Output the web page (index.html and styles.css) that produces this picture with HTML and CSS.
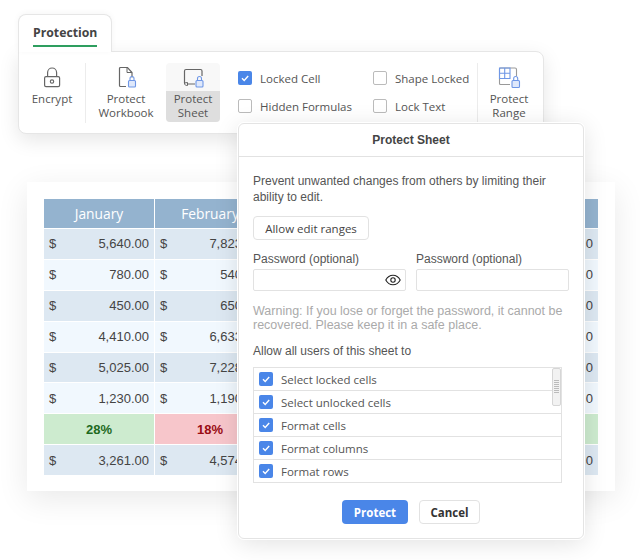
FILE: index.html
```html
<!DOCTYPE html>
<html lang="en">
<head>
    <meta charset="UTF-8">
    <title>Protect Sheet</title>
    <link rel="stylesheet" href="styles.css">
</head>
<body>

    <!-- Spreadsheet behind everything, middle columns are covered by the dialog -->
    <section class="sheet">
        <div class="grid">
            <div class="head">January</div><div class="head">February</div><div class="head"></div><div class="head"></div><div class="head"></div>

            <div class="cell dark"><span>$</span><span>5,640.00</span></div><div class="cell dark"><span>$</span><span>7,823.00</span></div><div class="cell dark"></div><div class="cell dark"></div><div class="cell dark end">0</div>
            <div class="cell light"><span>$</span><span>780.00</span></div><div class="cell light"><span>$</span><span>540.00</span></div><div class="cell light"></div><div class="cell light"></div><div class="cell light end">0</div>
            <div class="cell dark"><span>$</span><span>450.00</span></div><div class="cell dark"><span>$</span><span>650.00</span></div><div class="cell dark"></div><div class="cell dark"></div><div class="cell dark end">0</div>
            <div class="cell light"><span>$</span><span>4,410.00</span></div><div class="cell light"><span>$</span><span>6,633.00</span></div><div class="cell light"></div><div class="cell light"></div><div class="cell light end">0</div>
            <div class="cell dark"><span>$</span><span>5,025.00</span></div><div class="cell dark"><span>$</span><span>7,228.00</span></div><div class="cell dark"></div><div class="cell dark"></div><div class="cell dark end">0</div>
            <div class="cell light"><span>$</span><span>1,230.00</span></div><div class="cell light"><span>$</span><span>1,190.00</span></div><div class="cell light"></div><div class="cell light"></div><div class="cell light end">0</div>
            <div class="pct up">28%</div><div class="pct down">18%</div><div class="pct up"></div><div class="pct up"></div><div class="pct up"></div>
            <div class="cell dark"><span>$</span><span>3,261.00</span></div><div class="cell dark"><span>$</span><span>4,574.00</span></div><div class="cell dark"></div><div class="cell dark"></div><div class="cell dark end">0</div>
        </div>
    </section>

    <!-- Ribbon -->
    <section class="ribbon-wrap">
        <div class="tab"><span class="tab-label">Protection</span></div>
        <div class="ribbon">
            <div class="tool tool-encrypt">
                <svg class="icon" width="24" height="24" viewBox="0 0 24 24" fill="none">
                    <rect x="4.600" y="11.600" width="15" height="10" rx="1.400" stroke="#666" stroke-width="1.200"/>
                    <path d="M7.600 11.500V7.500a4.500 4.500 0 0 1 9 0v4" stroke="#666" stroke-width="1.200"/>
                    <circle cx="12" cy="16.600" r="1.700" stroke="#666" stroke-width="1.100"/>
                </svg>
                <span class="tool-label">Encrypt</span>
            </div>
            <div class="divider"></div>
            <div class="tool tool-book">
                <svg class="icon" width="24" height="24" viewBox="0 0 24 24" fill="none">
                    <path d="M12 21.500H6.500a1 1 0 0 1-1-1V3.500a1 1 0 0 1 1-1h7l4.500 5v5" stroke="#666" stroke-width="1.200"/>
                    <path d="M13 2.500v5h5" stroke="#666" stroke-width="1"/>
                    <rect x="14.500" y="15.500" width="7" height="6.500" rx="1" fill="#dfe8fb" stroke="#6f97e6" stroke-width="1.100"/>
                    <path d="M16 15.500v-2a2 2 0 0 1 4 0v2" stroke="#6f97e6" stroke-width="1.100"/>
                </svg>
                <span class="tool-label">Protect<br>Workbook</span>
            </div>
            <div class="tool tool-sheet">
                <div class="sheet-top">
                    <svg width="24" height="24" viewBox="0 0 24 24" fill="none">
                        <path d="M3.500 18V6a1.500 1.500 0 0 1 1.500-1.500h14.500A1.500 1.500 0 0 1 21 6v5M14 19H6.500" stroke="#666" stroke-width="1.200"/>
                        <path d="M3.500 18c0 2 1 2.500 3 2.500V17.500z" stroke="#666" stroke-width="1"/>
                        <rect x="15" y="15.500" width="7" height="6.500" rx="1" fill="#dfe8fb" stroke="#6f97e6" stroke-width="1.100"/>
                        <path d="M16.500 15.500v-2a2 2 0 0 1 4 0v2" stroke="#6f97e6" stroke-width="1.100"/>
                    </svg>
                </div>
                <span class="tool-label sheet-label">Protect<br>Sheet</span>
            </div>
            <div class="checks">
                <label class="check-row"><span class="box on"><svg width="14" height="14" viewBox="0 0 14 14"><path d="M4 7.200l2.200 2.200L10.200 5" fill="none" stroke="#fff" stroke-width="1.400"/></svg></span>Locked Cell</label>
                <label class="check-row"><span class="box"></span>Shape Locked</label>
                <label class="check-row"><span class="box"></span>Hidden Formulas</label>
                <label class="check-row"><span class="box"></span>Lock Text</label>
            </div>
            <div class="divider divider-right"></div>
            <div class="tool tool-range">
                <svg class="icon" width="26" height="24" viewBox="0 0 26 24" fill="none">
                    <path d="M14 19.500H4.500a1 1 0 0 1-1-1V4a1 1 0 0 1 1-1h14.500a1.500 1.500 0 0 1 1.500 1.500V11" stroke="#999" stroke-width="1.100"/>
                    <path d="M3.500 3h10.500v10.500H3.500zM3.500 8.200h10.500M8.700 3v10.500" stroke="#6f97e6" stroke-width="1.100"/>
                    <rect x="16" y="15.500" width="7.500" height="7" rx="1" fill="#dfe8fb" stroke="#6f97e6" stroke-width="1.100"/>
                    <path d="M17.700 15.500v-2a2 2 0 0 1 4 0v2" stroke="#6f97e6" stroke-width="1.100"/>
                </svg>
                <span class="tool-label">Protect<br>Range</span>
            </div>
        </div>
    </section>

    <!-- Dialog -->
    <section class="dialog">
        <header class="dialog-title">Protect Sheet</header>
        <div class="dialog-body">
            <p class="intro">Prevent unwanted changes from others by limiting their ability to edit.</p>
            <button class="btn-ranges" type="button">Allow edit ranges</button>
            <div class="passwords">
                <div class="field">
                    <label class="field-label">Password (optional)</label>
                    <div class="input">
                        <svg width="16" height="12" viewBox="0 0 16 12" fill="none">
                            <path d="M0.800 6C2.500 2.800 5 1.200 8 1.200S13.500 2.800 15.200 6C13.500 9.200 11 10.800 8 10.800S2.500 9.200 0.800 6z" stroke="#222" stroke-width="1.100"/>
                            <circle cx="8" cy="6" r="2.200" stroke="#222" stroke-width="1.100"/>
                        </svg>
                    </div>
                </div>
                <div class="field">
                    <label class="field-label">Password (optional)</label>
                    <div class="input"></div>
                </div>
            </div>
            <p class="warning">Warning: If you lose or forget the password, it cannot be recovered. Please keep it in a safe place.</p>
            <p class="allow">Allow all users of this sheet to</p>
            <div class="perm-list">
                <div class="perm"><span class="box on"><svg width="14" height="14" viewBox="0 0 14 14"><path d="M4 7.200l2.200 2.200L10.200 5" fill="none" stroke="#fff" stroke-width="1.400"/></svg></span>Select locked cells</div>
                <div class="perm"><span class="box on"><svg width="14" height="14" viewBox="0 0 14 14"><path d="M4 7.200l2.200 2.200L10.200 5" fill="none" stroke="#fff" stroke-width="1.400"/></svg></span>Select unlocked cells</div>
                <div class="perm"><span class="box on"><svg width="14" height="14" viewBox="0 0 14 14"><path d="M4 7.200l2.200 2.200L10.200 5" fill="none" stroke="#fff" stroke-width="1.400"/></svg></span>Format cells</div>
                <div class="perm"><span class="box on"><svg width="14" height="14" viewBox="0 0 14 14"><path d="M4 7.200l2.200 2.200L10.200 5" fill="none" stroke="#fff" stroke-width="1.400"/></svg></span>Format columns</div>
                <div class="perm"><span class="box on"><svg width="14" height="14" viewBox="0 0 14 14"><path d="M4 7.200l2.200 2.200L10.200 5" fill="none" stroke="#fff" stroke-width="1.400"/></svg></span>Format rows</div>
                <div class="scroll-thumb"></div>
            </div>
            <div class="actions">
                <button class="btn-protect" type="button">Protect</button>
                <button class="btn-cancel" type="button">Cancel</button>
            </div>
        </div>
    </section>

</body>
</html>
```

FILE: styles.css
```css
/* Global Styles */
body {
    margin: 0;
    background-color: #fff;
    color: #444;
    font-family: 'Open Sans', sans-serif;
    width: 640px;
    height: 560px;
    overflow: hidden;
    position: relative;
}

p {
    margin: 0;
}

/* Spreadsheet card */
.sheet {
    position: absolute;
    left: 27px;
    top: 182px;
    width: 588px;
    height: 309px;
    box-sizing: border-box;
    padding: 17px;
    background: #fff;
    box-shadow: 0 8px 30px rgba(0, 0, 0, 0.09);
}

.grid {
    display: grid;
    grid-template-columns: repeat(5, 110px);
    grid-template-rows: 29px repeat(8, 29.900px);
    gap: 1px;
    background: #fff;
    font-family: 'Liberation Sans', sans-serif;
    font-size: 13px;
    color: #444;
}

.head {
    background: #94b3cf;
    color: #fff;
    font-family: 'Open Sans', sans-serif;
    font-size: 13.800px;
    display: flex;
    align-items: center;
    justify-content: center;
}

.cell {
    display: flex;
    align-items: center;
    justify-content: space-between;
    padding: 0 5px;
}

.cell.end {
    justify-content: flex-end;
}

.dark {
    background: #dde8f2;
}

.light {
    background: #f1f8fe;
}

.pct {
    display: flex;
    align-items: center;
    justify-content: center;
    font-weight: bold;
}

.up {
    background: #cdebcf;
    color: #1e6a1e;
}

.down {
    background: #f7c6cb;
    color: #9a0c14;
}

/* Ribbon */
.ribbon-wrap {
    position: absolute;
    left: 18px;
    top: 14px;
    width: 526px;
}

.tab {
    width: 94px;
    height: 38px;
    box-sizing: border-box;
    padding: 9px 14px 0;
    background: #fff;
    border-radius: 8px 8px 0 0;
    border: 1px solid #e6e6e6;
    border-bottom: none;
    margin-bottom: -1px;
    position: relative;
    z-index: 1;
    box-shadow: 0 -1px 6px rgba(0, 0, 0, 0.04);
}

.tab-label {
    display: block;
    font-size: 12.250px;
    font-weight: bold;
    line-height: 18px;
    height: 21px;
    width: 64px;
    white-space: nowrap;
    color: #444;
    border-bottom: 2px solid #2e9e5f;
}

.ribbon {
    height: 83px;
    box-sizing: border-box;
    display: flex;
    padding: 11px 0 0;
    background: #fff;
    border: 1px solid #e6e6e6;
    border-radius: 0 8px 8px 8px;
    box-shadow: 0 6px 20px rgba(0, 0, 0, 0.1);
}

.tool {
    display: flex;
    flex-direction: column;
    align-items: center;
}

.tool-label {
    font-size: 11.500px;
    line-height: 14px;
    color: #555;
    text-align: center;
    margin-top: 3px;
}

.icon {
    margin-top: 2px;
}

.tool-encrypt {
    width: 66px;
}

.divider {
    width: 1px;
    height: 60px;
    background: #ececec;
}

.tool-book {
    width: 80px;
}

.tool-sheet {
    width: 54px;
    height: 59px;
    border-radius: 4px;
    overflow: hidden;
    background: #f8f8f8;
}

.sheet-top {
    height: 28px;
    padding-top: 2px;
    box-sizing: border-box;
}

.sheet-label {
    display: block;
    width: 100%;
    margin: 0;
    padding-top: 1px;
    height: 31px;
    background: #dedede;
}

.checks {
    display: grid;
    grid-template-columns: 135px 104px;
    grid-auto-rows: 28px;
    margin-left: 18px;
    padding-top: 1px;
}

.check-row {
    display: flex;
    align-items: center;
    gap: 8px;
    font-size: 11.500px;
    color: #555;
}

.box {
    width: 14px;
    height: 14px;
    box-sizing: border-box;
    border: 1px solid #bbb;
    border-radius: 2px;
    background: #fff;
    flex: none;
    display: block;
}

.box.on {
    background: #4a86e8;
    border: none;
}

.box svg {
    display: block;
}

.tool-range {
    width: 62px;
}

/* Dialog */
.dialog {
    position: absolute;
    left: 238px;
    top: 123px;
    width: 346px;
    height: 416px;
    box-sizing: border-box;
    background: #fff;
    border: 1px solid #e4e4e4;
    border-radius: 6px;
    box-shadow: 0 0 0 1px #fff, 0 4px 24px rgba(0, 0, 0, 0.12);
}

.dialog-title {
    height: 32px;
    line-height: 32px;
    text-align: center;
    border-bottom: 1px solid #e2e2e2;
    font-family: 'Liberation Sans', sans-serif;
    font-size: 12px;
    font-weight: bold;
    color: #444;
}

.dialog-body {
    padding: 16px 14px 0;
    font-family: 'Liberation Sans', sans-serif;
    font-size: 12px;
    color: #555;
}

.intro {
    line-height: 16px;
}

.btn-ranges {
    display: block;
    margin-top: 11px;
    width: 116px;
    height: 24px;
    padding: 0;
    background: #fff;
    border: 1px solid #e2e2e2;
    border-radius: 4px;
    font-family: 'Open Sans', sans-serif;
    font-size: 11.500px;
    color: #444;
}

.passwords {
    display: flex;
    gap: 10px;
    margin-top: 11px;
}

.field-label {
    display: block;
    line-height: 16px;
}

.field {
    width: 153px;
}

.input {
    margin-top: 2px;
    height: 22px;
    box-sizing: border-box;
    border: 1px solid #e2e2e2;
    border-radius: 2px;
    display: flex;
    align-items: center;
    justify-content: flex-end;
    padding-right: 4px;
}

.warning {
    margin-top: 13px;
    line-height: 14px;
    font-size: 12.500px;
    color: #aaa;
}

.allow {
    margin-top: 11px;
    line-height: 16px;
}

.perm-list {
    margin-top: 8px;
    width: 309px;
    height: 116px;
    box-sizing: border-box;
    border: 1px solid #e2e2e2;
    position: relative;
}

.perm {
    height: 23px;
    box-sizing: border-box;
    display: flex;
    align-items: center;
    gap: 8px;
    padding-left: 5px;
    font-family: 'Open Sans', sans-serif;
    font-size: 11.500px;
    color: #555;
    border-bottom: 1px solid #e2e2e2;
}

.perm:last-of-type {
    border-bottom: none;
}

.scroll-thumb {
    position: absolute;
    right: 0;
    top: 0;
    width: 7px;
    height: 36px;
    background: #f2f2f2;
    border: 1px solid #d6d6d6;
    border-radius: 2px;
}

.scroll-thumb::after {
    content: "";
    position: absolute;
    left: 1px;
    right: 1px;
    top: 11px;
    height: 13px;
    background: repeating-linear-gradient(#bbb 0 1px, transparent 1px 2px);
}

.actions {
    display: flex;
    justify-content: center;
    gap: 11px;
    margin-top: 17px;
}

.btn-protect, .btn-cancel {
    height: 24px;
    padding: 0;
    font-family: 'Open Sans', sans-serif;
    font-size: 11.500px;
    font-weight: bold;
    border-radius: 4px;
}

.btn-protect {
    width: 66px;
    background: #4a86e8;
    border: none;
    color: #fff;
}

.btn-cancel {
    width: 61px;
    background: #fff;
    border: 1px solid #e2e2e2;
    color: #333;
}
```
